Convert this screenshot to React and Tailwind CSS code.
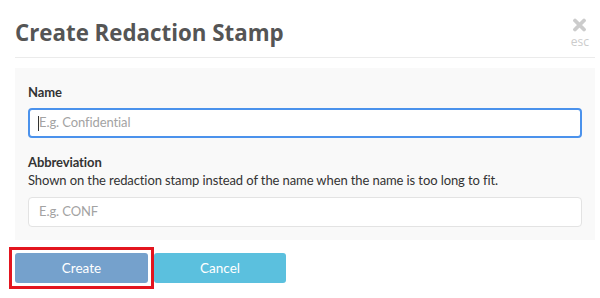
import React from 'react';

const CloseIcon = () => (
  <svg width="15" height="14" viewBox="0 0 15 14" className="block">
    <path d="M3 2.5 L12 11.5 M12 2.5 L3 11.5" stroke="#cccccc" strokeWidth="3.8" strokeLinecap="round" />
  </svg>
);

const App = () => {
  return (
    <div className="w-[600px] h-[298px] bg-white overflow-hidden font-['Lato','Open_Sans',sans-serif] text-[#333]">
      <div className="mx-[15px] mr-[5px] h-[58px] border-b border-[#ebebeb] flex items-start justify-between">
        <h1 className="mt-[17px] text-[22.3px] leading-[32px] font-bold text-[#555] font-['Open_Sans',sans-serif]">Create Redaction Stamp</h1>
        <button className="mt-[18px] mr-[6px] flex flex-col items-center text-[#cccccc]">
          <CloseIcon />
          <span className="text-[12px] leading-[14px] mt-[3px] font-['Open_Sans',sans-serif]">esc</span>
        </button>
      </div>

      <div className="mt-[10px] ml-[15px] mr-[5px] bg-[#f9f9f9] px-[13px] pt-[15px] pb-[13px] text-[13px] tracking-[-0.1px]">
        <label className="block leading-[18px] font-bold text-[#333]">Name</label>
        <div className="mt-[7px] h-[30px] rounded-[4px] border-2 border-[#4b92ec] bg-white flex items-center pl-[8px]">
          <span className="w-px h-[15px] bg-[#333]" />
          <span className="text-[#a3a3a3]">E.g. Confidential</span>
        </div>

        <label className="block mt-[15px] leading-[18px] font-bold text-[#333]">Abbreviation</label>
        <p className="leading-[18px] text-[#333]">
          Shown on the redaction stamp instead of the name when the name is too long to fit.
        </p>
        <div className="mt-[8px] h-[30px] rounded-[4px] border border-[#e3e3e3] bg-white flex items-center pl-[10px]">
          <span className="text-[#a3a3a3]">E.g. CONF</span>
        </div>
      </div>

      <div className="mt-[13px] ml-[15px] flex gap-[6px] text-[13.5px]">
        <span className="-m-[6px] p-[3px] border-[3px] border-[#e3151f] flex">
          <button className="w-[133px] h-[30px] rounded-[3px] bg-[#75a1cc] text-white">
            Create
          </button>
        </span>
        <button className="w-[132px] h-[30px] rounded-[3px] bg-[#5bc0de] text-white">
          Cancel
        </button>
      </div>
    </div>
  );
};

export default App;
